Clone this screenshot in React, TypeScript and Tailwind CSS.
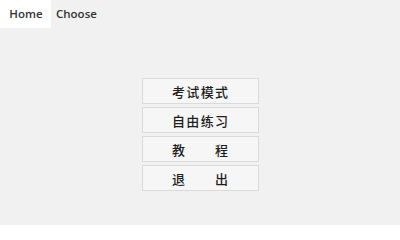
const items: string[][] = [["考", "试", "模", "式"], ["自", "由", "练", "习"], ["教", "程"], ["退", "出"]];

const App = () => {
  return (
    <div className="w-[400px] h-[225px] bg-[#f1f1f1] text-[#222] font-['Liberation_Sans','Noto_Sans_CJK_SC',sans-serif]">
      <div className="flex h-[28px] items-center">
        <div className="w-[51px] h-full bg-white flex items-center justify-center pl-[1px] text-[11.5px] font-semibold text-[#333] font-['Open_Sans',sans-serif]">Home</div>
        <div className="pl-[5px] text-[11.5px] font-semibold text-[#333] font-['Open_Sans',sans-serif]">Choose</div>
      </div>
      <div className="flex flex-col items-center pt-[50px] gap-[3px]">
        {items.map((chars, i) => (
          <div key={i} className="w-[117px] h-[26px] bg-[#f6f6f6] border border-[#dadada] flex items-center justify-center">
            <div className="w-[56px] flex justify-between text-[13px] leading-none font-medium text-[#1e1e1e] font-['Noto_Sans_CJK_SC',sans-serif]">
              {chars.map((c, j) => (
                <span key={j}>{c}</span>
              ))}
            </div>
          </div>
        ))}
      </div>
    </div>
  );
};

export default App;
